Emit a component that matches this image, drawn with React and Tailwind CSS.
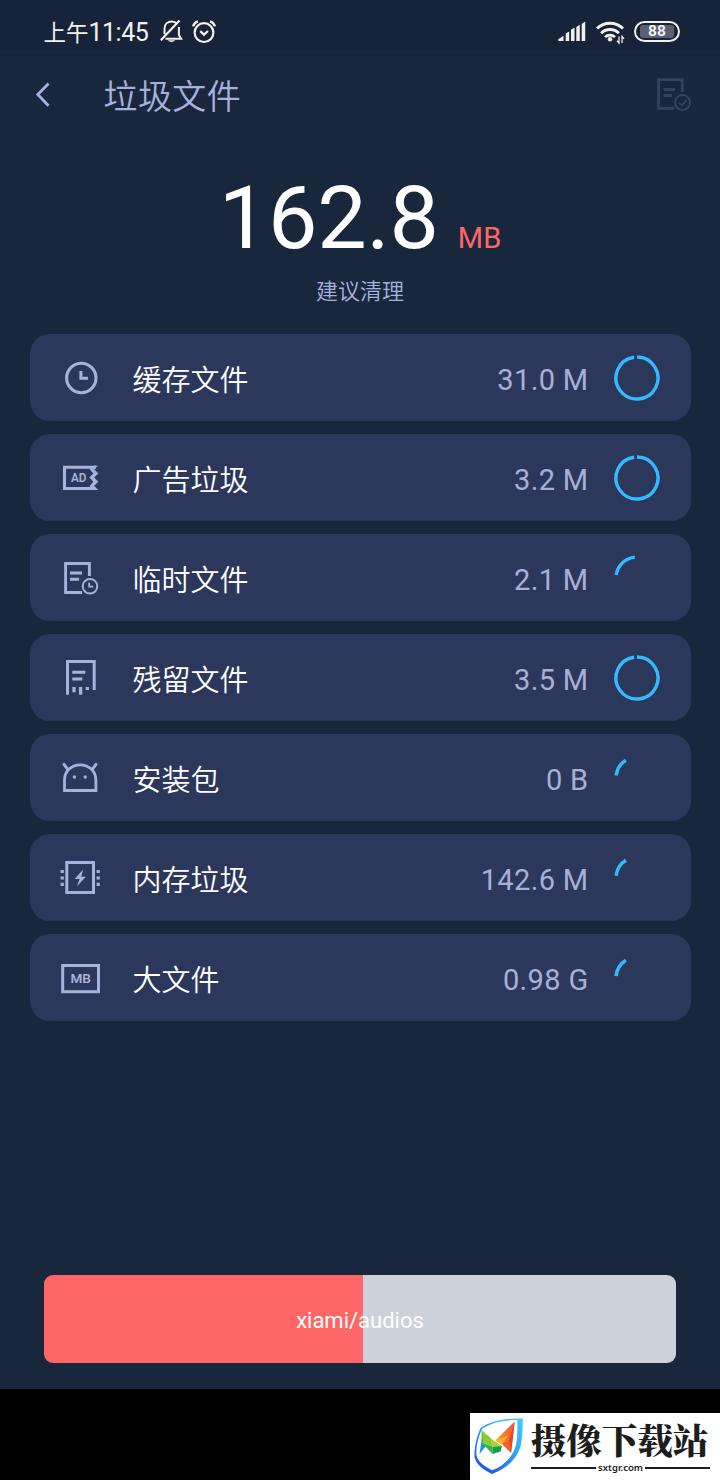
import React from "react";

const LINE = "#a7b2dc";

function ClockIcon() {
  return (
    <g>
      <circle cx="22.3" cy="22" r="14.7" strokeWidth="3.1" />
      <path d="M21.9 15v7.2H29" />
    </g>
  );
}

function AdIcon() {
  return (
    <g>
      <path d="M37 11.3H5.5v21.2H37" strokeWidth="3.1" />
      <path
        d="M39.3 9.7L35 13.1 39.3 17.4 35.2 21.6 39.3 25.7 35 29.9 39.3 34H34L30.5 30 34.3 25.7 30.3 21.6 34.3 17.4 30.5 13.1 34 9.7z"
        fill={LINE}
        stroke="none"
      />
      <text x="12" y="26.3" fontSize="12" fontWeight="600" fill={LINE} stroke="none" textLength="15.5" lengthAdjust="spacingAndGlyphs" className="font-['Roboto',sans-serif]">AD</text>
    </g>
  );
}

function TempIcon() {
  return (
    <g>
      <path d="M30.4 20V7.5H6.6v29H23M11 17h12M11 23.3h9" strokeWidth="2.9" />
      <circle cx="31" cy="30.3" r="7.3" strokeWidth="2" />
      <path d="M30.2 26.5v4.2H34.2" strokeWidth="1.8" />
    </g>
  );
}

function ResidualIcon() {
  return (
    <g>
      <path d="M8.5 38.7V5.5h26.7V34M13.3 16.3h13M13.3 23h10" />
      <path d="M15 31v5.3M21.6 31v7.7M28.3 31v3" strokeWidth="3.3" />
    </g>
  );
}

function PackageIcon() {
  return (
    <g>
      <path d="M5.5 34.5V24.5C5.5 15 12.5 8.8 21.2 8.8S36.9 15 36.9 24.5V34.5z" strokeWidth="2.8" />
      <path d="M5 8.4l3.4 4.4M37 8.4l-3.4 4.4" strokeLinecap="round" />
      <circle cx="15.4" cy="21" r="1.7" fill={LINE} stroke="none" />
      <circle cx="26.2" cy="21" r="1.7" fill={LINE} stroke="none" />
    </g>
  );
}

function MemoryIcon() {
  return (
    <g>
      <rect x="7.8" y="6.5" width="26.7" height="30" />
      <path d="M3.2 14v3.1M3.2 20.4v3.1M3.2 26.8V30M39.2 14v3.1M39.2 20.4v3.1M39.2 26.8V30" strokeWidth="3.2" />
      <path d="M24.3 13.3l-8.6 9.6h4.9L18 30.2l8.9-9.4h-4.7z" fill={LINE} stroke="none" />
    </g>
  );
}

function LargeIcon() {
  return (
    <g>
      <rect x="3.7" y="9.5" width="35.8" height="26.2" />
      <text x="11.5" y="27.1" fontSize="13.2" fontWeight="600" fill={LINE} stroke="none" textLength="20.5" lengthAdjust="spacingAndGlyphs" className="font-['Roboto',sans-serif]">MB</text>
    </g>
  );
}

const rows = [
  { label: "缓存文件", value: "31.0 M", Icon: ClockIcon, from: 0, to: 352 },
  { label: "广告垃圾", value: "3.2 M", Icon: AdIcon, from: 0, to: 352 },
  { label: "临时文件", value: "2.1 M", Icon: TempIcon, from: 278, to: 354 },
  { label: "残留文件", value: "3.5 M", Icon: ResidualIcon, from: 0, to: 352 },
  { label: "安装包", value: "0 B", Icon: PackageIcon, from: 277, to: 328 },
  { label: "内存垃圾", value: "142.6 M", Icon: MemoryIcon, from: 276, to: 328 },
  { label: "大文件", value: "0.98 G", Icon: LargeIcon, from: 275, to: 328 },
];

function point(deg) {
  const a = (deg * Math.PI) / 180;
  return `${(23 + 21 * Math.sin(a)).toFixed(2)} ${(23 - 21 * Math.cos(a)).toFixed(2)}`;
}

function Spinner({ from, to }) {
  const large = to - from > 180 ? 1 : 0;
  return (
    <svg viewBox="0 0 46 46" className="mt-[21px] h-[46px] w-[46px] shrink-0">
      <path d={`M${point(from)}A21 21 0 ${large} 1 ${point(to)}`} fill="none" stroke="#33bbff" strokeWidth="3.4" />
    </svg>
  );
}

function Row({ label, value, Icon, from, to }) {
  return (
    <li className="flex h-[87.4px] items-start rounded-[20px] bg-[#2c385b] pr-[30.5px] pl-[29.5px]">
      <svg viewBox="0 0 44 44" fill="none" stroke={LINE} strokeWidth="3" className="mt-[22px] h-11 w-11 shrink-0">
        <Icon />
      </svg>
      <span className="mt-px ml-[29.5px] flex-1 text-[29px] leading-[93px] font-[350] text-white">{label}</span>
      <span className="mt-px mr-[25.5px] text-[29px] leading-[91px] tracking-[0.35px] text-[#a7b0d6]">{value}</span>
      <Spinner from={from} to={to} />
    </li>
  );
}

function StatusBar() {
  return (
    <div className="flex h-[50px] items-start bg-[#172338] pl-[43.5px] text-[#f1f1ee]">
      <div className="flex w-[114.5px] items-baseline leading-[66px]">
        <span className="text-[22.5px]">上午</span>
        <span className="text-[25px] tracking-[-0.5px]">11:45</span>
      </div>
      <svg viewBox="158 16 62 30" fill="none" stroke="currentColor" strokeWidth="2" className="mt-4 h-[30px] w-[62px]">
        <path d="M165.500 38.800h15.700l-2.300-3.800V27M177 24c-1.200-1.600-3-2.400-5.200-2.400-4.400 0-7.300 2.800-7.300 7.200v5.500" />
        <path d="M160.800 40.200L179.500 20.500" strokeWidth="2.200" />
        <path d="M168 40.200c1.300 2.300 5.700 2.300 7 0z" fill="currentColor" stroke="none" />
        <circle cx="204" cy="32.600" r="9.400" strokeWidth="2.200" />
        <path d="M200.200 31.200l3.800 3.500 4-3.700M193 26.300c.8-2.200 2.600-4.200 5-5M215 26.300c-.8-2.200-2.600-4.200-5-5" strokeWidth="2.300" />
      </svg>
      <svg viewBox="556 16 70 30" fill="none" stroke="currentColor" className="mt-4 ml-[336px] h-[30px] w-[70px]">
        <path d="M558.300 41v-1.700l5.200-3.500V41zM565.700 41v-7.500l3.500-2V41zM571 41V29.800l3.500-2.300V41zM576.300 41V27l3.500-2.200V41zM581.700 41V24l3.500-2.500V41z" fill="currentColor" stroke="none" />
        <path d="M597 28.500a18.500 18.500 0 0 1 26 0M601.200 33.200a12.500 12.500 0 0 1 17.600 0" strokeWidth="3" />
        <path d="M605 37.200a7 7 0 0 1 10 0" strokeWidth="2.600" />
        <circle cx="610" cy="39.200" r="2.200" fill="currentColor" stroke="none" />
        <path d="M619 36.500v6.500l-2-2.300M622 43v-6.500l2 2.300" strokeWidth="1.300" />
      </svg>
      <div className="mt-[21px] ml-[8px] flex h-[21px] w-[46px] items-center justify-center rounded-full border-2 border-current">
        <span className="flex h-[13px] w-[34px] items-center justify-center rounded-[3px] bg-[#596173] pt-px text-[15.5px] leading-none font-bold">88</span>
      </div>
    </div>
  );
}

function Header() {
  return (
    <header className="flex h-[90px] items-center pl-[34px] text-[#a7b2dc]">
      <svg viewBox="0 0 18 28" fill="none" stroke="currentColor" strokeWidth="2.8" className="h-7 w-[18px]">
        <path d="M14.5 2.5L3.800 13.500 14.500 24.800" />
      </svg>
      <h1 className="mt-[4px] ml-[51.5px] text-[34px] leading-[90px] font-[350] tracking-[0.4px]">垃圾文件</h1>
      <svg viewBox="654 74 40 40" fill="none" stroke="#31425e" strokeWidth="2.8" className="ml-auto mr-[26px] h-10 w-10">
        <path d="M682.300 91V78.700h-23.700V107.300H674M663.500 88.500h11.500M663.500 94.500h8.500" />
        <circle cx="682.500" cy="101.500" r="7.500" strokeWidth="2" />
        <path d="M679 101.700l2.800 2.600 4.700-5.200" strokeWidth="1.800" />
      </svg>
    </header>
  );
}

function SiteBadge() {
  return (
    <div className="flex h-[67px] w-[250px] items-start bg-white">
      <svg viewBox="0 1 58 67" className="h-[67px] w-[58px] shrink-0">
        <defs>
          <linearGradient id="shield" x1="1" y1="0" x2="0.2" y2="1">
            <stop offset="0" stopColor="#3fd0fa" />
            <stop offset="0.5" stopColor="#2aa0f8" />
            <stop offset="1" stopColor="#1f50ef" />
          </linearGradient>
          <linearGradient id="flame" x1="0" y1="0" x2="1" y2="0">
            <stop offset="0" stopColor="#fba51e" />
            <stop offset="1" stopColor="#f0502f" />
          </linearGradient>
        </defs>
        <path d="M52.800 6.500C34 6 20 9.500 10.500 16 6.500 25 4 37 4.500 45c1.500 8 9.500 13 17.500 17C36 56.500 46 48 50 36c2-7 2.800-19 2.800-29.500z" fill="url(#shield)" />
        <path d="M47.300 8C33 8 21 11 11.800 17.200 8 26 5.500 36 6.500 43.500c2 7 8 11 15.500 14.800C34 54 42.500 45 45.800 33.500c1.700-6.500 1.700-17.500 1.500-25.500z" fill="#fff" />
        <path d="M11.500 29l-2 13 6.500-8z" fill="#1595dd" />
        <path d="M11.700 18.300L20.500 26l2 9-11-5.500z" fill="#3dbb3f" />
        <path d="M11.700 18.300l1.500 11.700 9.300 5.500L20.500 27z" fill="#8fcb2c" />
        <path d="M11 30l11.500 5v7z" fill="#35b44a" />
        <path d="M20.500 26.500l11.500 7.500-9.500 1.500z" fill="#a6d62c" />
        <path d="M22.500 35l9.500-1-1.500 5.500-8 2.500z" fill="#159c4c" />
        <path d="M25.500 28.300L44.700 9.500 39 27l-7.500 5.500z" fill="url(#flame)" />
        <path d="M44.700 9.500L41 41l-9-9 7-5z" fill="#f0602a" />
        <path d="M25.500 28.300l12.500-4.500-6.500 8.700z" fill="#f8b52b" />
        <path d="M44.700 9.500L41 41l-2-14z" fill="#e8432b" />
      </svg>
      <div className="flex w-[185px] flex-col items-center text-[#1d1d1d]">
        <div className="mt-[7px] mr-[2px] font-['Noto_Serif_CJK_SC','Noto_Sans_CJK_SC',serif] text-[35.5px] leading-[38px] font-black whitespace-nowrap">摄像下载站</div>
        <div className="mt-[3px] flex w-[179px] items-center gap-[2px]">
          <span className="h-[2px] flex-1 bg-[#1d1d1d]" />
          <span className="font-['Noto_Sans',sans-serif] text-[9.5px] leading-[14px] font-semibold">sxtgr.com</span>
          <span className="h-[2px] flex-1 bg-[#1d1d1d]" />
        </div>
      </div>
    </div>
  );
}

export default function App() {
  return (
    <div className="flex h-[1480px] w-[720px] flex-col overflow-hidden bg-[#19273d] font-['Roboto','Noto_Sans_CJK_SC',sans-serif]">
      <StatusBar />
      <Header />
      <section className="flex h-[194px] flex-col items-center pt-[26px]">
        <div className="flex h-[103px] items-baseline leading-[103px]">
          <span className="text-[88px] tracking-[-0.2px] text-white">162.8</span>
          <span className="ml-[19px] text-[29px] text-[#ff6666]">MB</span>
        </div>
        <p className="mt-[7px] text-[22px] leading-[32px] font-[350] text-[#a7b2dc]">建议清理</p>
      </section>
      <ul className="flex flex-col gap-[12.6px] px-[29.5px]">
        {rows.map((row) => (
          <Row key={row.label} {...row} />
        ))}
      </ul>
      <div className="mt-auto px-11 pb-[26px]">
        <button className="flex h-[88px] w-full items-center justify-center rounded-[9px] bg-linear-to-r from-[#ff6666] from-[50.45%] to-[#cdd1da] to-[50.45%] pt-[2px] text-[22px] text-white">
          xiami/audios
        </button>
      </div>
      <footer className="flex h-[91px] items-end justify-end bg-black">
        <SiteBadge />
      </footer>
    </div>
  );
}
